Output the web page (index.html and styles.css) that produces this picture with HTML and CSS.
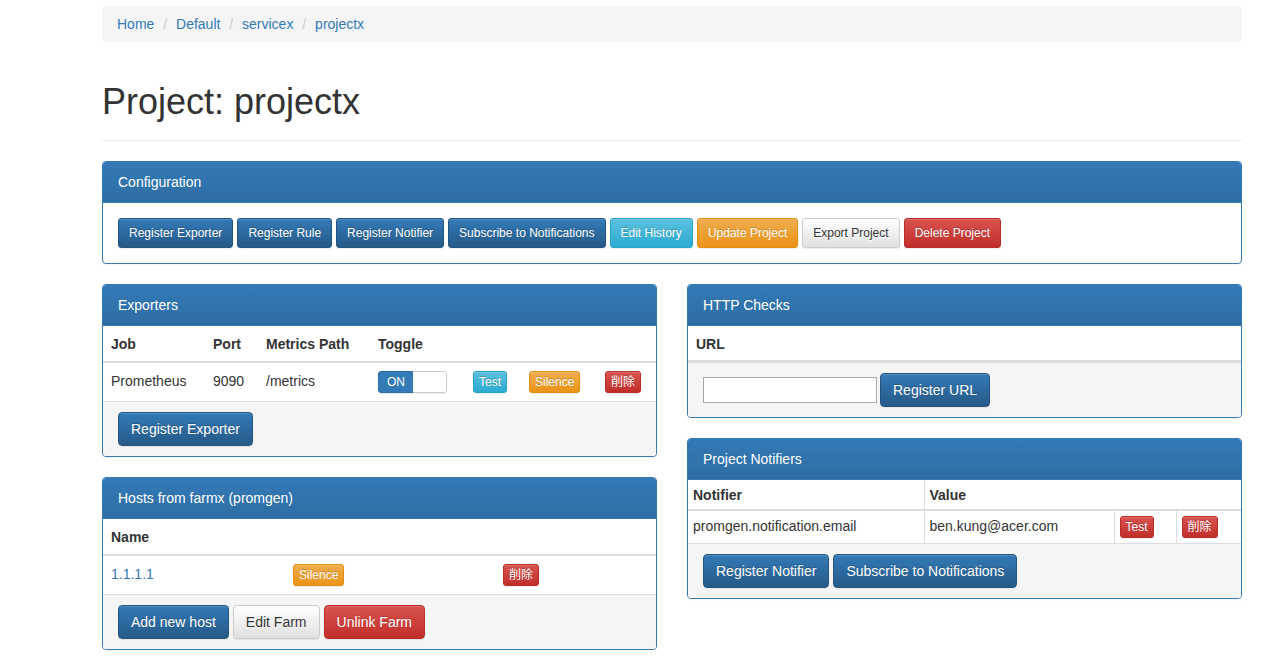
FILE: index.html
```html
<!DOCTYPE html>
<html>
<head>
<meta charset="utf-8">
<title>Project: projectx</title>
<link rel="stylesheet" href="styles.css">
</head>
<body>
<div class="container">
  <ol class="breadcrumb">
    <li><a href="#">Home</a></li>
    <li><a href="#">Default</a></li>
    <li><a href="#">servicex</a></li>
    <li><a href="#">projectx</a></li>
  </ol>

  <div class="page-header"><h1>Project: projectx</h1></div>

  <div class="panel">
    <div class="panel-heading">Configuration</div>
    <div class="panel-body btn-row">
      <button class="btn btn-sm btn-primary">Register Exporter</button>
      <button class="btn btn-sm btn-primary">Register Rule</button>
      <button class="btn btn-sm btn-primary">Register Notifier</button>
      <button class="btn btn-sm btn-primary">Subscribe to Notifications</button>
      <button class="btn btn-sm btn-info">Edit History</button>
      <button class="btn btn-sm btn-warning">Update Project</button>
      <button class="btn btn-sm btn-default">Export Project</button>
      <button class="btn btn-sm btn-danger">Delete Project</button>
    </div>
  </div>

  <div class="row">
    <div class="col">
      <div class="panel">
        <div class="panel-heading">Exporters</div>
        <table class="table">
          <colgroup>
            <col class="c-job"><col class="c-port"><col class="c-path"><col class="c-toggle"><col class="c-test"><col class="c-silence"><col class="c-del">
          </colgroup>
          <thead>
            <tr><th>Job</th><th>Port</th><th>Metrics Path</th><th>Toggle</th><th></th><th></th><th></th></tr>
          </thead>
          <tbody>
            <tr>
              <td>Prometheus</td>
              <td>9090</td>
              <td>/metrics</td>
              <td><span class="toggle"><span class="toggle-on">ON</span><span class="toggle-handle"></span></span></td>
              <td><button class="btn btn-xs btn-info">Test</button></td>
              <td><button class="btn btn-xs btn-warning">Silence</button></td>
              <td><button class="btn btn-xs btn-danger cjk">削除</button></td>
            </tr>
          </tbody>
        </table>
        <div class="panel-footer btn-row">
          <button class="btn btn-primary">Register Exporter</button>
        </div>
      </div>

      <div class="panel">
        <div class="panel-heading">Hosts from farmx (promgen)</div>
        <table class="table">
          <colgroup><col class="c-name"><col class="c-hsil"><col class="c-hdel"></colgroup>
          <thead><tr><th>Name</th><th></th><th></th></tr></thead>
          <tbody>
            <tr>
              <td><a href="#">1.1.1.1</a></td>
              <td><button class="btn btn-xs btn-warning">Silence</button></td>
              <td><button class="btn btn-xs btn-danger cjk">削除</button></td>
            </tr>
          </tbody>
        </table>
        <div class="panel-footer btn-row">
          <button class="btn btn-primary">Add new host</button>
          <button class="btn btn-default">Edit Farm</button>
          <button class="btn btn-danger">Unlink Farm</button>
        </div>
      </div>
    </div>

    <div class="col">
      <div class="panel">
        <div class="panel-heading">HTTP Checks</div>
        <table class="table table-head-only">
          <thead><tr><th>URL</th></tr></thead>
        </table>
        <div class="panel-footer url-form">
          <input class="url-input" type="text">
          <button class="btn btn-primary">Register URL</button>
        </div>
      </div>

      <div class="panel">
        <div class="panel-heading">Project Notifiers</div>
        <table class="table table-condensed table-bordered">
          <colgroup><col class="c-notifier"><col class="c-value"><col class="c-ntest"><col class="c-ndel"></colgroup>
          <thead><tr><th>Notifier</th><th colspan="3">Value</th></tr></thead>
          <tbody>
            <tr>
              <td>promgen.notification.email</td>
              <td>ben.kung@acer.com</td>
              <td><button class="btn btn-xs btn-danger">Test</button></td>
              <td><button class="btn btn-xs btn-danger cjk">削除</button></td>
            </tr>
          </tbody>
        </table>
        <div class="panel-footer btn-row">
          <button class="btn btn-primary">Register Notifier</button>
          <button class="btn btn-primary">Subscribe to Notifications</button>
        </div>
      </div>
    </div>
  </div>
</div>
</body>
</html>
```

FILE: styles.css
```css
* { box-sizing: border-box; }

body {
  margin: 0;
  font-family: "Liberation Sans", Arial, Helvetica, sans-serif;
  font-size: 14px;
  line-height: 20px;
  color: #333;
  background: #fff;
}

a { color: #337ab7; text-decoration: none; }

.container {
  width: 1140px;
  margin-left: 102px;
  padding-top: 6px;
}

.breadcrumb {
  list-style: none;
  margin: 0 0 20px;
  padding: 8px 15px;
  background: #f5f5f5;
  border-radius: 4px;
}
.breadcrumb li { display: inline-block; }
.breadcrumb li + li::before {
  content: "/\00a0";
  padding: 0 5px;
  color: #ccc;
}

.page-header {
  margin: 40px 0 20px;
  padding-bottom: 9px;
  border-bottom: 1px solid #eee;
}
.page-header h1 {
  margin: 20px 0 10px;
  font-size: 36px;
  line-height: 39px;
  font-weight: 500;
}

.panel {
  margin-bottom: 20px;
  background: #fff;
  border: 1px solid #337ab7;
  border-radius: 4px;
  box-shadow: 0 1px 2px rgba(0,0,0,.05);
}
.panel-heading {
  padding: 10px 15px;
  color: #fff;
  background: linear-gradient(to bottom, #337ab7 0, #2e6da4 100%);
  border-bottom: 1px solid #337ab7;
  border-radius: 3px 3px 0 0;
}
.panel-body { padding: 15px; }
.panel-footer {
  padding: 10px 15px;
  background: #f5f5f5;
  border-top: 1px solid #ddd;
  border-radius: 0 0 3px 3px;
}

.btn-row {
  display: flex;
  flex-wrap: wrap;
  gap: 4px;
}

.row {
  display: grid;
  grid-template-columns: 555px 555px;
  column-gap: 30px;
}

/* tables */
.table {
  width: 100%;
  border-collapse: collapse;
  border-spacing: 0;
  table-layout: fixed;
}
.table th, .table td {
  padding: 8px;
  line-height: 20px;
  text-align: left;
  vertical-align: top;
}
.table th {
  padding-bottom: 7px;
  font-weight: bold;
  border-bottom: 2px solid #ddd;
}
.table td { border-top: 1px solid #ddd; }
.table-head-only th { padding-bottom: 6px; }

.table-condensed th, .table-condensed td { padding: 5px; }
.table-condensed th { padding-bottom: 4px; }
.table-bordered th, .table-bordered td { border: 1px solid #ddd; }
.table-bordered th { border-bottom-width: 2px; }
.table-bordered th { border-top: 0; }
.table-bordered tr > :first-child { border-left: 0; }
.table-bordered tr > :last-child { border-right: 0; }
.table-bordered tbody tr:last-child td { border-bottom: 0; }

.c-job { width: 102px; }
.c-port { width: 53px; }
.c-path { width: 112px; }
.c-toggle { width: 95px; }
.c-test { width: 56px; }
.c-silence { width: 76px; }
.c-del { width: 59px; }

.c-name { width: 182px; }
.c-hsil { width: 210px; }
.c-hdel { width: 161px; }

.c-notifier { width: 236px; }
.c-value { width: 190px; }
.c-ntest { width: 62px; }
.c-ndel { width: 65px; }

/* buttons */
.btn {
  display: inline-block;
  margin: 0;
  padding: 6px 12px;
  font-family: inherit;
  font-size: 14px;
  line-height: 20px;
  font-weight: 400;
  white-space: nowrap;
  vertical-align: middle;
  border: 1px solid transparent;
  border-radius: 4px;
  cursor: pointer;
  color: #fff;
  text-shadow: 0 -1px 0 rgba(0,0,0,.2);
  box-shadow: inset 0 1px 0 rgba(255,255,255,.15), 0 1px 1px rgba(0,0,0,.075);
}
.btn-sm {
  padding: 5px 10px;
  font-size: 12px;
  line-height: 18px;
  border-radius: 3px;
}
.btn-xs {
  padding: 1px 5px;
  font-size: 12px;
  line-height: 18px;
  border-radius: 3px;
  vertical-align: top;
}
.btn-primary {
  background: linear-gradient(to bottom, #337ab7 0, #265a88 100%);
  border-color: #245580;
}
.btn-info {
  background: linear-gradient(to bottom, #5bc0de 0, #2aabd2 100%);
  border-color: #28a4c9;
}
.btn-warning {
  background: linear-gradient(to bottom, #f0ad4e 0, #eb9316 100%);
  border-color: #e38d13;
}
.btn-danger {
  background: linear-gradient(to bottom, #d9534f 0, #c12e2a 100%);
  border-color: #b92c28;
}
.btn-default {
  color: #333;
  text-shadow: 0 1px 0 #fff;
  background: linear-gradient(to bottom, #fff 0, #e0e0e0 100%);
  border-color: #ccc;
}
.cjk {
  font-family: "Liberation Sans", "Noto Sans CJK JP", sans-serif;
}

/* toggle switch */
.toggle {
  display: inline-flex;
  width: 69px;
  height: 22px;
  border-radius: 3px;
  overflow: hidden;
  vertical-align: top;
  box-shadow: 0 1px 1px rgba(0,0,0,.075);
}
.toggle-on {
  width: 35px;
  padding-left: 8px;
  font-size: 12px;
  line-height: 20px;
  color: #fff;
  background: #337ab7;
  border: 1px solid #2e6da4;
  border-right: 0;
  border-radius: 3px 0 0 3px;
}
.toggle-handle {
  flex: 1;
  background: #fff;
  border: 1px solid #ccc;
  border-left: 0;
  border-radius: 0 3px 3px 0;
}

/* url form */
.url-form {
  display: flex;
  align-items: center;
  gap: 3px;
}
.url-input {
  width: 174px;
  height: 26px;
  margin: 0;
  padding: 1px 2px;
  font-family: inherit;
  font-size: 14px;
  border: 1px solid #a9a9a9;
  background: #fff;
}
```
